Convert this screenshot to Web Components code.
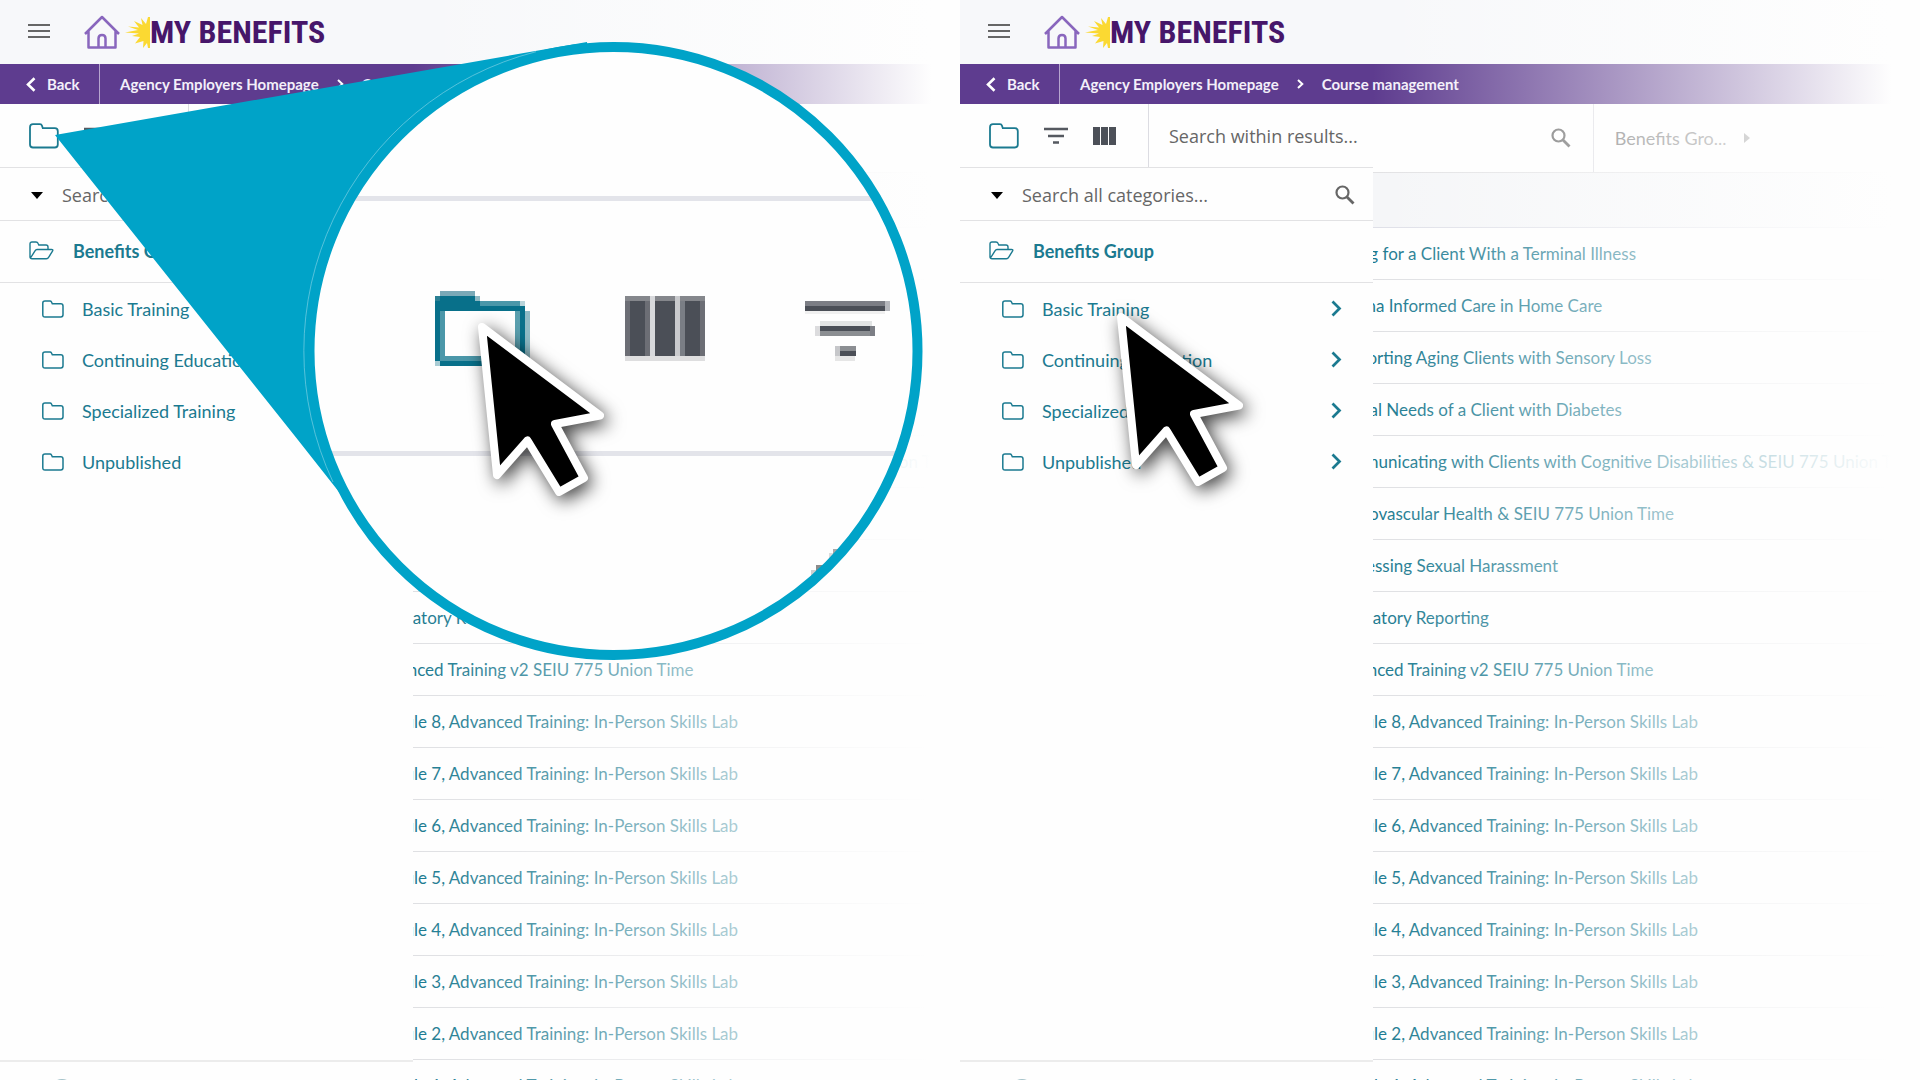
<!DOCTYPE html>
<html lang="en">
<head>
<meta charset="utf-8">
<title>My Benefits – Course management</title>
<style>
  html, body { margin: 0; height: 100%; }
  body { background: #fefefe; font-family: Lato, "Open Sans", sans-serif; overflow: hidden; }
  main { display: flex; height: 100vh; }
  .step { position: relative; flex: 1 1 0; min-width: 0; display: flex; }
</style>
</head>
<body>
<main>
  <div class="step">
    <benefits-page></benefits-page>
    <magnifier-callout></magnifier-callout>
  </div>
  <div class="step">
    <benefits-page></benefits-page>
    <pointer-arrow></pointer-arrow>
  </div>
</main>

<script>
const define = (name, html) => {
  const template = document.createElement('template');
  template.innerHTML = html;
  customElements.define(name, class extends HTMLElement {
    constructor() {
      super();
      this.attachShadow({ mode: 'open' }).append(template.content.cloneNode(true));
    }
  });
};

const icons = {
  menu: [22, 16, '<path d="M0 2h22M0 8h22M0 14h22" stroke="#666" stroke-width="2"/>'],
  folder: [30, 26, '<path d="M4 1.200h7q1.500 0 2 1.500l.8 2.500h12q3 0 3 3v13.300q0 3-3 3H4q-3 0-3-3V4.200q0-3 3-3z" fill="none" stroke="#1b7a90" stroke-width="1.800"/>'],
  smallfolder: [22, 18, '<path d="M3 1h5q1 0 1.500 1l.8 1.800h8.500q2.200 0 2.200 2.200v8.800q0 2.200-2.200 2.200H3q-2.200 0-2.200-2.200V3Q.8 1 3 1z" fill="none" stroke="#1b7a90" stroke-width="1.500"/>'],
  openfolder: [25, 19, '<path d="M1 16V3q0-2 2-2h4q1.500 0 2 1.200L9.800 4H17q2 0 2 2v2.500M1.500 17L6 9.800q.8-1.300 2-1.300h14.500q2 0 1 1.700L19.800 16q-.8 1.800-2.500 1.800H3q-2 0-2-1.800" fill="none" stroke="#1b7a90" stroke-width="1.400"/>'],
  filter: [24, 17, '<path d="M0 2h24M4 9h16M9 15.500h6" stroke="#555960" stroke-width="2.300"/>'],
  columns: [23, 18, '<path d="M0 0h7v18H0zM8 0h7v18H8zM16 0h7v18h-7z" fill="#4c5058"/>'],
  search: [20, 20, '<circle cx="7.500" cy="7.500" r="6" fill="none" stroke="#666" stroke-width="2.200"/><path d="M12 12l6.500 6.500" stroke="#666" stroke-width="2.800"/>'],
  caretdown: [12, 7, '<path d="M0 0h12L6 7z" fill="#000"/>'],
  caretright: [6, 10, '<path d="M0 0l6 5-6 5z" fill="#6e6e6e"/>'],
  back: [10, 15, '<path d="M8.500 1.200L2 7.500l6.500 6.300" fill="none" stroke="#fff" stroke-width="2.600"/>'],
  crumb: [7, 10, '<path d="M1 1l4.300 4L1 9" fill="none" stroke="#fff" stroke-width="2"/>'],
  chevron: [11, 17, '<path d="M1.500 1.500L8.500 8.500l-7 7" fill="none" stroke="#1b7a90" stroke-width="2.700"/>'],
  home: [36, 34, '<path d="M1 19L18 2l17 17M4.500 16v16.500h27V16M14.500 32V23.500q0-3.500 3.500-3.500t3.500 3.500V32" fill="none" stroke="#8966bd" stroke-width="2.500" stroke-linejoin="round"/>'],
  sun: [25, 33, '<path d="M25 1V32h-2l-1-5-4 5 .5-7-8.500 2.500 5-6.500-8-1 7-2.500L0 16.500 13 14 3 10.500l11 1L9 5l8.500 4L16 2l5 6 2-7z" fill="#fbd932"/>']
};
customElements.define('ui-icon', class extends HTMLElement {
  connectedCallback() {
    if (this.shadowRoot) return;
    const [w, h, body] = icons[this.getAttribute('name')];
    this.attachShadow({ mode: 'open' }).innerHTML =
      `<style>:host{display:inline-flex;flex:none}svg{display:block}</style>
       <svg width="${w}" height="${h}" viewBox="0 0 ${w} ${h}" aria-hidden="true">${body}</svg>`;
  }
});

const base = `
  * { box-sizing: border-box; }
  button { border: 0; padding: 0; background: none; font: inherit; color: inherit; display: flex; align-items: center; cursor: pointer; }
  a { color: inherit; text-decoration: none; }
  input { border: 0; outline: 0; padding: 0; background: none; min-width: 0; font: 18px/24px "Open Sans", "Noto Sans", sans-serif; color: #666; }
  input::placeholder { color: #666; opacity: 1; }
`;

define('site-header', `
  <style>${base}
    :host { display: flex; align-items: center; height: 64px; padding-left: 28px; background: #f7f8fa; }
    button { height: 62px; align-self: flex-start; }
    .logo { display: flex; align-items: center; margin-left: 34px; }
    ui-icon[name=sun] { margin-left: 5px; }
    b { font: bold 32px/40px "Liberation Sans Narrow", "Roboto Condensed", "Liberation Sans", sans-serif; color: #47166a; white-space: nowrap; }
  </style>
  <button aria-label="Menu"><ui-icon name="menu"></ui-icon></button>
  <a class="logo" href="#home"><ui-icon name="home"></ui-icon><ui-icon name="sun"></ui-icon><b>MY BENEFITS</b></a>`);

define('crumb-bar', `
  <style>${base}
    :host { display: flex; height: 40px; background: #5e3c8f; color: #f3effa; font-size: 15px; line-height: 20px; font-weight: bold; }
    button { width: 100px; padding-left: 26px; gap: 11px; border-right: 1px solid #b7a5cf; }
    nav { display: flex; align-items: center; padding-left: 20px; gap: 18px; white-space: nowrap; }
  </style>
  <button><ui-icon name="back"></ui-icon>Back</button>
  <nav aria-label="Breadcrumb"><a href="#agency">Agency Employers Homepage</a><ui-icon name="crumb"></ui-icon><a href="#courses">Course management</a></nav>`);

define('category-item', `
  <style>${base}
    :host { display: block; }
    a { display: flex; align-items: center; height: 51px; padding: 0 31px 0 42px; gap: 18px; color: #1b7a90; font-size: 18px; line-height: 24px; }
    span { flex: 1; }
  </style>
  <a href="#category"><ui-icon name="smallfolder"></ui-icon><span><slot></slot></span><ui-icon name="chevron"></ui-icon></a>`);

define('category-drawer', `
  <style>${base}
    :host { display: flex; flex-direction: column; background: #fefefe; }
    .tools { display: flex; height: 64px; border-bottom: 1px solid #e2e2e4; }
    .views { display: flex; align-items: center; gap: 25px; width: 189px; padding-left: 29px; border-right: 1px solid #dcdce2; }
    .tools input { flex: 1; padding-left: 20px; }
    .find { display: flex; align-items: center; height: 53px; padding: 2px 18px 0 31px; gap: 19px; border-bottom: 1px solid #e2e2e4; }
    .find input { flex: 1; }
    .group { display: flex; align-items: center; height: 62px; padding: 0 0 2px 29px; gap: 19px; border-bottom: 1px solid #e2e2e4; color: #1b7a90; font-size: 18px; line-height: 24px; font-weight: bold; }
    footer { margin-top: auto; height: 20px; padding: 17px 0 0 50px; border-top: 2px solid #ececec; overflow: hidden; }
    i { display: block; width: 24px; height: 24px; border: 2px solid #a5c3ca; border-radius: 12px; }
  </style>
  <div class="tools">
    <div class="views">
      <button aria-label="Categories"><ui-icon name="folder"></ui-icon></button>
      <button aria-label="Filter"><ui-icon name="filter"></ui-icon></button>
      <button aria-label="Columns"><ui-icon name="columns"></ui-icon></button>
    </div>
    <input aria-label="Search within results" placeholder="Search within results...">
  </div>
  <div class="find">
    <button aria-label="Expand"><ui-icon name="caretdown"></ui-icon></button>
    <input aria-label="Search all categories" placeholder="Search all categories...">
    <button aria-label="Search"><ui-icon name="search"></ui-icon></button>
  </div>
  <a class="group" href="#group"><ui-icon name="openfolder"></ui-icon>Benefits Group</a>
  <nav>
    <category-item>Basic Training</category-item>
    <category-item>Continuing Education</category-item>
    <category-item>Specialized Training</category-item>
    <category-item>Unpublished</category-item>
  </nav>
  <footer><i></i></footer>`);

define('course-row', `
  <style>${base}
    :host { display: flex; align-items: center; box-sizing: border-box; height: 52px; border-bottom: 1px solid #dfe0e3; color: #1b7a90; font-size: 17px; line-height: 20px; white-space: nowrap; }
    a { margin-left: -43px; }
  </style>
  <a href="#course"><slot></slot></a>`);

define('course-results', `
  <style>${base}
    :host { display: block; overflow: hidden; }
    .tools { display: flex; height: 69px; border-bottom: 1px solid #e2e2e4; }
    .search { display: flex; align-items: center; justify-content: flex-end; width: 220px; padding-right: 22px; }
    .scope { display: flex; align-items: center; flex: 1; gap: 17px; padding-left: 21px; border-left: 1px solid #dcdce2; color: #6e6e6e; font-size: 18px; line-height: 24px; }
    .head { height: 55px; background: #f5f6f8; border-bottom: 1px solid #dfe0e8; }
  </style>
  <div class="tools">
    <div class="search"><button aria-label="Search"><ui-icon name="search"></ui-icon></button></div>
    <button class="scope">Benefits Gro...<ui-icon name="caretright"></ui-icon></button>
  </div>
  <div class="head"></div>
  <course-row>Caring for a Client With a Terminal Illness</course-row>
  <course-row>Trauma Informed Care in Home Care</course-row>
  <course-row>Supporting Aging Clients with Sensory Loss</course-row>
  <course-row>Special Needs of a Client with Diabetes</course-row>
  <course-row>Communicating with Clients with Cognitive Disabilities &amp; SEIU 775 Union Time</course-row>
  <course-row>Cardiovascular Health &amp; SEIU 775 Union Time</course-row>
  <course-row>Addressing Sexual Harassment</course-row>
  <course-row>Mandatory Reporting</course-row>
  <course-row>Advanced Training v2 SEIU 775 Union Time</course-row>
  <course-row>Module 8, Advanced Training: In-Person Skills Lab</course-row>
  <course-row>Module 7, Advanced Training: In-Person Skills Lab</course-row>
  <course-row>Module 6, Advanced Training: In-Person Skills Lab</course-row>
  <course-row>Module 5, Advanced Training: In-Person Skills Lab</course-row>
  <course-row>Module 4, Advanced Training: In-Person Skills Lab</course-row>
  <course-row>Module 3, Advanced Training: In-Person Skills Lab</course-row>
  <course-row>Module 2, Advanced Training: In-Person Skills Lab</course-row>
  <course-row>Module 1, Advanced Training: In-Person Skills Lab</course-row>`);

define('benefits-page', `
  <style>
    :host { position: relative; flex: 1; min-width: 0; display: flex; flex-direction: column; overflow: hidden; }
    .body { flex: 1; min-height: 0; display: flex; }
    category-drawer { width: 43%; flex: none; }
    course-results { flex: 1; min-width: 0; }
    .fade { position: absolute; inset: 0; pointer-events: none;
      background: linear-gradient(to right, rgba(254,254,254,0) 43%, #fefefe 97%); }
  </style>
  <site-header></site-header>
  <crumb-bar></crumb-bar>
  <div class="body"><category-drawer></category-drawer><course-results></course-results></div>
  <div class="fade"></div>`);

const arrow = '<path d="M8 8L126 96.500l-45 8.500 29 54-25 14-31.500-51.500L23 156z" fill="#000" stroke="#fff" stroke-width="8" stroke-linejoin="round"/>';
const arrowShadow = 'filter: drop-shadow(4px 5px 9px rgba(0,0,0,.75));';

define('pointer-arrow', `
  <style>
    :host { position: absolute; left: 153px; top: 309px; pointer-events: none; }
    svg { display: block; overflow: visible; ${arrowShadow} }
  </style>
  <svg width="134" height="182" viewBox="0 0 134 182">${arrow}</svg>`);

/* Zoomed toolbar glyphs: every cell is [x, y, width, height, colour]. */
const cells = [
  [440, 291, 35, 5, '#7aa9b7'], [435, 296, 5, 5, '#2b7f93'], [440, 296, 35, 15, '#08708a'], [475, 296, 5, 5, '#8db8c3'],
  [435, 301, 45, 10, '#08708a'], [480, 301, 40, 5, '#4b97a9'], [520, 301, 5, 5, '#b9d4da'], [480, 306, 45, 5, '#08708a'],
  [435, 311, 5, 50, '#08708a'], [440, 311, 5, 50, '#4b97a9'], [445, 356, 70, 5, '#4b97a9'], [440, 361, 80, 5, '#08708a'],
  [435, 361, 5, 5, '#a9ccd4'], [515, 311, 5, 50, '#5a9fae'], [520, 306, 5, 58, '#08708a'], [525, 311, 5, 50, '#8fbbc5'],
  [625, 296, 25, 5, '#85878c'], [655, 296, 20, 5, '#85878c'], [680, 296, 25, 5, '#85878c'],
  [625, 301, 5, 55, '#6c6e75'], [630, 301, 15, 55, '#4b4f57'], [645, 301, 5, 55, '#6c6e75'], [650, 296, 5, 60, '#d8d9dc'],
  [655, 301, 20, 55, '#4b4f57'], [675, 296, 5, 60, '#c9cacd'], [680, 301, 5, 55, '#7a7e85'], [685, 301, 15, 55, '#4b4f57'], [700, 301, 5, 55, '#6c6e75'],
  [625, 356, 80, 5, '#dededf'],
  [805, 301, 80, 5, '#7c7e85'], [805, 306, 80, 5, '#4b4f57'], [885, 301, 5, 10, '#b6b8bd'], [805, 311, 80, 3, '#f0f0f0'],
  [820, 321, 52, 5, '#e2e4e4'], [820, 326, 55, 5, '#4b4f57'], [820, 331, 55, 5, '#8b8e92'], [815, 326, 5, 10, '#dcdcde'], [870, 326, 5, 10, '#7c7e85'],
  [840, 346, 16, 5, '#8b8e92'], [840, 351, 16, 5, '#4b4f57'], [835, 346, 5, 10, '#c6c7ca'], [835, 356, 20, 5, '#e6e6e6'],
  [816, 565, 12, 12, '#8c8c8c'], [811, 570, 5, 6, '#d0d0d0'], [833, 549, 12, 12, '#a8a8a8'], [829, 553, 4, 5, '#dcdcdc']
].map(([x, y, w, h, c]) => `<rect x="${x}" y="${y}" width="${w}" height="${h}" fill="${c}"/>`).join('');

define('magnifier-callout', `
  <style>
    :host { position: absolute; left: 0; top: 0; pointer-events: none; }
    svg { display: block; overflow: visible; }
    .arrow { ${arrowShadow} }
  </style>
  <svg width="940" height="680" viewBox="0 0 940 680">
    <defs><clipPath id="lens"><circle cx="613.500" cy="351" r="303"/></clipPath></defs>
    <path d="M55 135L587 42 613 351 350 494 339 492 298 440z" fill="#00a3c8"/>
    <circle cx="613.500" cy="351" r="304" fill="#fefefe"/>
    <g clip-path="url(#lens)" shape-rendering="crispEdges">
      <path d="M300 196h640v5H300zM300 451h640v5H300z" fill="#e3e4ea"/>
      ${cells}
    </g>
    <circle cx="613.500" cy="351" r="304" fill="none" stroke="#00a3c8" stroke-width="10"/>
    <path d="M536 51.700A309 309 0 0 0 333 482" fill="none" stroke="#8fd6e8" stroke-width=".6"/>
    <g class="arrow" transform="translate(474 319)">${arrow}</g>
  </svg>`);
</script>
</body>
</html>
